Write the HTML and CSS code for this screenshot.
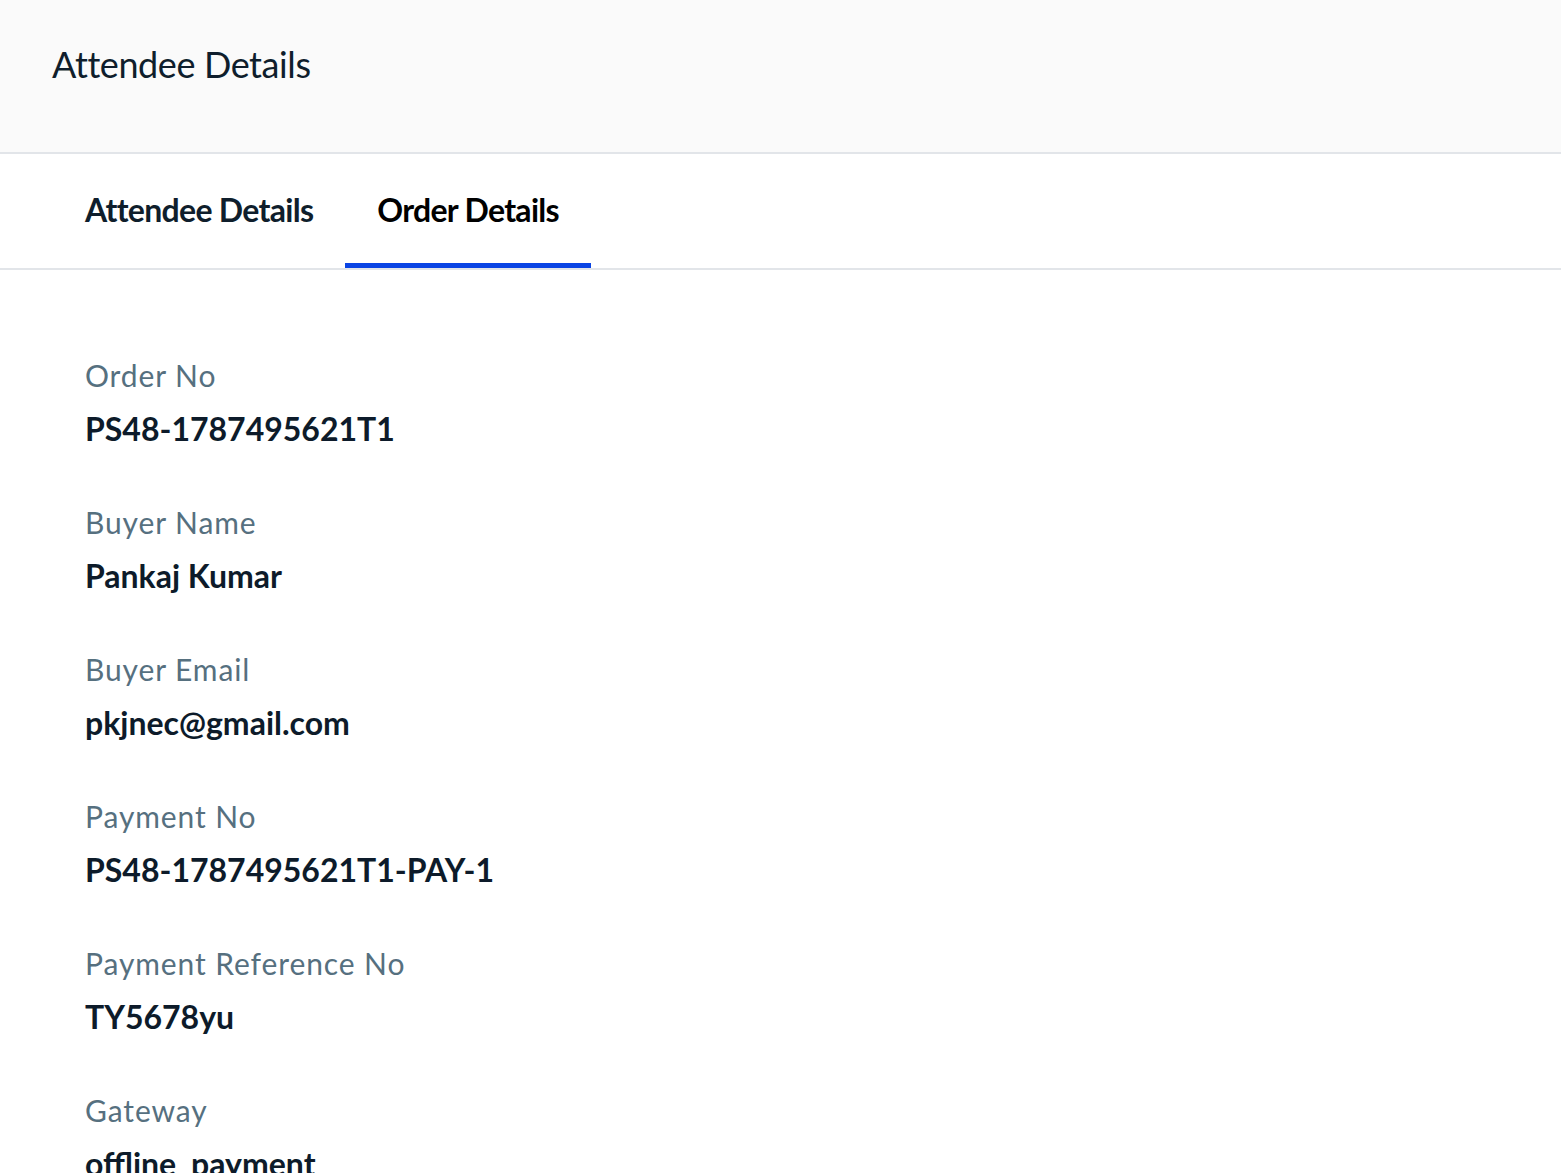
FILE: index.html
```html
<!DOCTYPE html>
<html lang="en">
<head>
  <meta charset="UTF-8">
  <meta name="viewport" content="width=device-width, initial-scale=1.0">
  <title>Attendee Details</title>
  <link rel="stylesheet" href="styles.css">
</head>

<body>
  <div class="page-header">
    <h1>Attendee Details</h1>
  </div>

  <div class="tabs">
    <div class="tab">Attendee Details</div>
    <div class="tab active">Order Details</div>
  </div>

  <div class="details">
    <div class="field">
      <div class="label">Order No</div>
      <div class="value">PS48-1787495621T1</div>
    </div>
    <div class="field">
      <div class="label">Buyer Name</div>
      <div class="value">Pankaj Kumar</div>
    </div>
    <div class="field">
      <div class="label">Buyer Email</div>
      <div class="value">pkjnec@gmail.com</div>
    </div>
    <div class="field">
      <div class="label">Payment No</div>
      <div class="value">PS48-1787495621T1-PAY-1</div>
    </div>
    <div class="field">
      <div class="label">Payment Reference No</div>
      <div class="value">TY5678yu</div>
    </div>
    <div class="field">
      <div class="label">Gateway</div>
      <div class="value">offline_payment</div>
    </div>
  </div>
</body>
</html>
```

FILE: styles.css
```css
body {
  font-family: Lato, "Open Sans", sans-serif;
  margin: 0;
  background-color: #ffffff;
  color: #0f1e2c;
}

.page-header {
  height: 154px;
  padding: 43px 52px 0;
  box-sizing: border-box;
  background-color: #fafafa;
  border-bottom: 2px solid #e2e5e9;
}

.page-header h1 {
  margin: 0;
  font-size: 36px;
  font-weight: 400;
  line-height: 1.2;
  letter-spacing: -0.4px;
  color: #0f1e2c;
}

.tabs {
  display: flex;
  padding: 0 53px;
  border-bottom: 2px solid #e2e5e9;
}

.tab {
  padding: 37px 32px 34px;
  font-size: 32px;
  font-weight: 700;
  line-height: 1.2;
  letter-spacing: -0.7px;
  color: #0f1e2c;
  border-bottom: 5px solid transparent;
}

.tab.active {
  color: #000000;
  border-bottom-color: #0a44e4;
}

.details {
  padding: 87px 85px 0;
  display: flex;
  flex-direction: column;
  gap: 55.6px;
}

.label {
  font-size: 30px;
  line-height: 1.2;
  letter-spacing: 0.9px;
  color: #56707f;
}

.value {
  margin-top: 17px;
  font-size: 32px;
  font-weight: 700;
  line-height: 1.2;
  color: #0d1b2a;
}
```
